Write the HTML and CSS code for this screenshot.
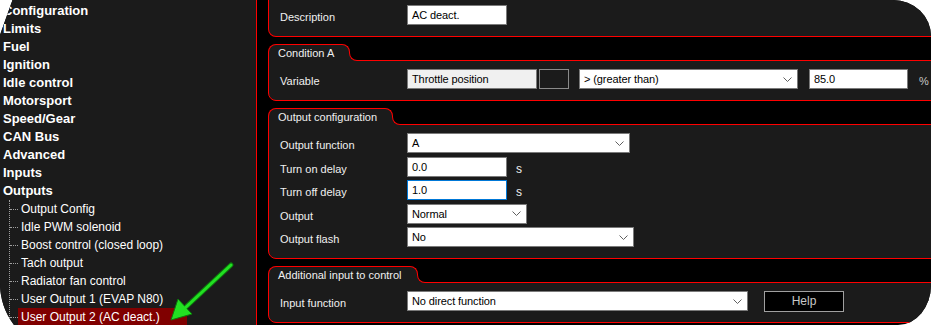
FILE: index.html
```html
<!DOCTYPE html>
<html lang="en">
<head>
  <meta charset="UTF-8">
  <title>User Output 2</title>
  <link rel="stylesheet" href="styles.css">
</head>
<body>
  <div class="frame">
    <aside class="tree">
      <ul class="nodes">
        <li><div class="node">Configuration</div></li>
        <li><div class="node">Limits</div></li>
        <li><div class="node">Fuel</div></li>
        <li><div class="node">Ignition</div></li>
        <li><div class="node">Idle control</div></li>
        <li><div class="node">Motorsport</div></li>
        <li><div class="node">Speed/Gear</div></li>
        <li><div class="node">CAN Bus</div></li>
        <li><div class="node">Advanced</div></li>
        <li><div class="node">Inputs</div></li>
        <li>
          <div class="node">Outputs</div>
          <ul class="children">
            <li><span>Output Config</span></li>
            <li><span>Idle PWM solenoid</span></li>
            <li><span>Boost control (closed loop)</span></li>
            <li><span>Tach output</span></li>
            <li><span>Radiator fan control</span></li>
            <li><span>User Output 1 (EVAP N80)</span></li>
            <li class="selected"><span>User Output 2 (AC deact.)</span></li>
          </ul>
        </li>
      </ul>
    </aside>

    <main class="panel">
      <section class="group first">
        <div class="box">
          <div class="row">
            <div class="label">Description</div>
            <div class="field w100">AC deact.</div>
          </div>
        </div>
      </section>

      <section class="group">
        <div class="tab">Condition A</div>
        <div class="box">
          <div class="row">
            <div class="label">Variable</div>
            <div class="field readonly w130">Throttle position</div>
            <div class="swatch"></div>
            <div class="field select w219">
              <span>&gt; (greater than)</span>
              <svg class="chev" width="9" height="5" viewBox="0 0 9 5"><polyline points="0.5,0.5 4.5,4.5 8.5,0.5" /></svg>
            </div>
            <div class="field w99 gap11">85.0</div>
            <div class="unit pct">%</div>
          </div>
        </div>
      </section>

      <section class="group">
        <div class="tab">Output configuration</div>
        <div class="box">
          <div class="row">
            <div class="label">Output function</div>
            <div class="field select w223">
              <span>A</span>
              <svg class="chev" width="9" height="5" viewBox="0 0 9 5"><polyline points="0.5,0.5 4.5,4.5 8.5,0.5" /></svg>
            </div>
          </div>
          <div class="row">
            <div class="label">Turn on delay</div>
            <div class="field w100">0.0</div>
            <div class="unit">s</div>
          </div>
          <div class="row">
            <div class="label">Turn off delay</div>
            <div class="field w100 focus">1.0</div>
            <div class="unit">s</div>
          </div>
          <div class="row">
            <div class="label">Output</div>
            <div class="field select w120">
              <span>Normal</span>
              <svg class="chev" width="9" height="5" viewBox="0 0 9 5"><polyline points="0.5,0.5 4.5,4.5 8.5,0.5" /></svg>
            </div>
          </div>
          <div class="row">
            <div class="label">Output flash</div>
            <div class="field select w227">
              <span>No</span>
              <svg class="chev" width="9" height="5" viewBox="0 0 9 5"><polyline points="0.5,0.5 4.5,4.5 8.5,0.5" /></svg>
            </div>
          </div>
        </div>
      </section>

      <section class="group">
        <div class="tab">Additional input to control</div>
        <div class="box">
          <div class="row">
            <div class="label">Input function</div>
            <div class="field select w341">
              <span>No direct function</span>
              <svg class="chev" width="9" height="5" viewBox="0 0 9 5"><polyline points="0.5,0.5 4.5,4.5 8.5,0.5" /></svg>
            </div>
            <div class="button">Help</div>
          </div>
        </div>
      </section>
    </main>

    <!-- pointer drawn over the tree -->
    <svg class="arrow" width="931" height="325" viewBox="0 0 931 325">
      <line x1="231" y1="265" x2="187" y2="306" stroke="#0c7a0c" stroke-width="5" stroke-linecap="round" />
      <polygon points="171,320 192,314 178,299" fill="#22e022" stroke="#0c7a0c" stroke-width="1" stroke-linejoin="round" />
      <line x1="231" y1="265" x2="185" y2="308" stroke="#22e022" stroke-width="3" stroke-linecap="round" />
    </svg>
  </div>
</body>
</html>
```

FILE: styles.css
```css
body {
  margin: 0;
  background: #fff;
  font-family: "Liberation Sans", Arial, sans-serif;
}

.frame {
  position: relative;
  display: flex;
  width: 931px;
  height: 325px;
  overflow: hidden;
  background: #000;
  clip-path: path("M 0 35 Q 8 12.5 12.5 0 L 893 0 A 38 36 0 0 1 931 36 L 931 285 A 33 40 0 0 1 898 325 L 14 325 A 70 70 0 0 1 0 283 Z");
}

/* tree on the left */

.tree {
  width: 256px;
  flex: none;
  padding-top: 2px;
  background: #1b1b1b;
  border-right: 1px solid #f00;
  color: #fff;
}

.tree ul {
  list-style: none;
  margin: 0;
  padding: 0;
}

.node {
  padding-left: 3px;
  font-size: 13px;
  font-weight: bold;
  line-height: 18px;
}

.children {
  margin-left: 9px !important;
  border-left: 1px dotted #a0a0a0;
}

.children li {
  display: flex;
  align-items: center;
  height: 18px;
  font-size: 12px;
}

.children li::before {
  content: "";
  width: 8px;
  border-top: 1px dotted #a0a0a0;
}

.children span {
  padding-left: 3px;
  line-height: 18px;
}

.children .selected span {
  width: 169px;
  box-sizing: border-box;
  background: #800000;
}

/* settings panel */

.panel {
  flex: 1;
  min-width: 0;
  display: flex;
  flex-direction: column;
  gap: 7px;
  padding-left: 11px;
  font-size: 11px;
  color: #f0f0f0;
}

.group {
  display: flex;
  flex-direction: column;
  margin-right: -40px;
}

.tab {
  position: relative;
  z-index: 1;
  align-self: flex-start;
  height: 16px;
  line-height: 16px;
  padding: 0 15px 0 9px;
  margin-bottom: -1px;
  background: #1b1b1b;
  border: 1px solid #f00;
  border-bottom: none;
  border-radius: 8px 8px 0 0;
}

.tab::before {
  content: "";
  position: absolute;
  left: 100%;
  bottom: 0;
  width: 10px;
  height: 8px;
  background: #1b1b1b;
}

.tab::after {
  content: "";
  position: absolute;
  left: 100%;
  bottom: 0;
  width: 9px;
  height: 7px;
  background: #000;
  border-left: 1px solid #f00;
  border-bottom: 1px solid #f00;
  border-bottom-left-radius: 8px;
}

.box {
  display: flex;
  flex-direction: column;
  gap: 3.5px;
  padding: 8px 0 11px 11px;
  background: #1b1b1b;
  border: 1px solid #f00;
  border-radius: 0 0 0 8px;
}

.first .box {
  border-top: none;
  padding-top: 5px;
}

.row {
  display: flex;
  align-items: center;
  height: 20px;
}

.label {
  width: 127px;
  flex: none;
  padding-top: 4px;
}

.field {
  box-sizing: border-box;
  height: 20px;
  padding: 0 4px;
  line-height: 18px;
  background: #fff;
  border: 1px solid #7a7a7a;
  color: #000;
  letter-spacing: -0.1px;
  white-space: nowrap;
}

.field.readonly {
  background: #f0f0f0;
}

.field.focus {
  border-color: #0078d7;
}

.select {
  display: flex;
  align-items: center;
  justify-content: space-between;
  padding-right: 5px;
}

.chev polyline {
  fill: none;
  stroke: #606060;
  stroke-width: 1;
}

.swatch {
  width: 30px;
  height: 20px;
  box-sizing: border-box;
  margin-left: 2px;
  background: #1b1b1b;
  border: 1px solid #8a8a8a;
}

.swatch + .select {
  margin-left: 10px;
}

.w99 { width: 99px; }
.w100 { width: 100px; }
.w120 { width: 120px; }
.w130 { width: 130px; }
.w219 { width: 219px; }
.w223 { width: 223px; }
.w227 { width: 227px; }
.w341 { width: 341px; }
.gap11 { margin-left: 11px; }

.unit {
  margin-left: 9px;
  padding-top: 4px;
  font-size: 12px;
}

.unit.pct {
  margin-left: 11px;
  font-size: 11px;
  color: #c8c8c8;
}

.button {
  width: 80px;
  height: 21px;
  box-sizing: border-box;
  margin-left: 16px;
  background: #000;
  border: 1px solid #a0a0a0;
  color: #c8c8c8;
  font-size: 12px;
  line-height: 19px;
  text-align: center;
}

.arrow {
  position: absolute;
  left: 0;
  top: 0;
  pointer-events: none;
}
```
